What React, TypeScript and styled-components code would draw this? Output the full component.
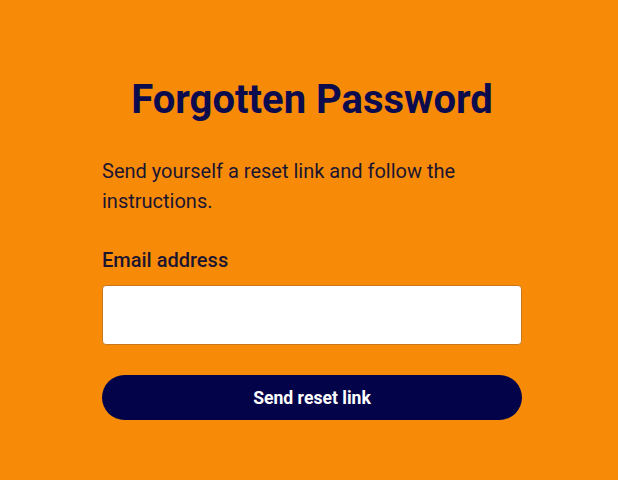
import React, { useState } from 'react';
import styled, { createGlobalStyle } from 'styled-components';

const GlobalStyle = createGlobalStyle`
  html, body {
    margin: 0;
    padding: 0;
    background: #f78b08;
  }

  body {
    font-family: Roboto, "Liberation Sans", Arial, sans-serif;
  }
`;

const Page = styled.main`
  min-height: 480px;
  background: #f78b08;
  display: flex;
  justify-content: center;
  padding: 76px 0 0 6px;
  box-sizing: border-box;
`;

const Form = styled.form`
  width: 420px;
  display: flex;
  flex-direction: column;
`;

const Title = styled.h1`
  margin: 0 0 32px;
  font-size: 40px;
  line-height: 48px;
  font-weight: 700;
  color: #0b0b4d;
  text-align: center;
`;

const Intro = styled.p`
  margin: 0 0 32px;
  font-size: 20px;
  line-height: 30px;
  color: #1c1530;
`;

const Label = styled.label`
  font-size: 20px;
  line-height: 24px;
  font-weight: 500;
  color: #1c1530;
  margin-bottom: 13px;
`;

const Input = styled.input`
  height: 60px;
  box-sizing: border-box;
  border: 1px solid #c8781c;
  border-radius: 4px;
  background: #fff;
  padding: 0 14px;
  font-size: 18px;
  font-family: inherit;
  margin-bottom: 30px;

  &:focus {
    outline: none;
  }
`;

const Button = styled.button`
  height: 45px;
  border: none;
  border-radius: 23px;
  background: #03034a;
  color: #fff;
  font-family: inherit;
  font-size: 17.6px;
  font-weight: 700;
  cursor: pointer;
`;

export default function App() {
  const [email, setEmail] = useState('');

  return (
    <>
      <GlobalStyle />
      <Page>
        <Form onSubmit={(e) => e.preventDefault()}>
          <Title>Forgotten Password</Title>
          <Intro>Send yourself a reset link and follow the instructions.</Intro>
          <Label htmlFor="email">Email address</Label>
          <Input
            id="email"
            type="email"
            value={email}
            onChange={(e) => setEmail(e.target.value)}
          />
          <Button type="submit">Send reset link</Button>
        </Form>
      </Page>
    </>
  );
}
